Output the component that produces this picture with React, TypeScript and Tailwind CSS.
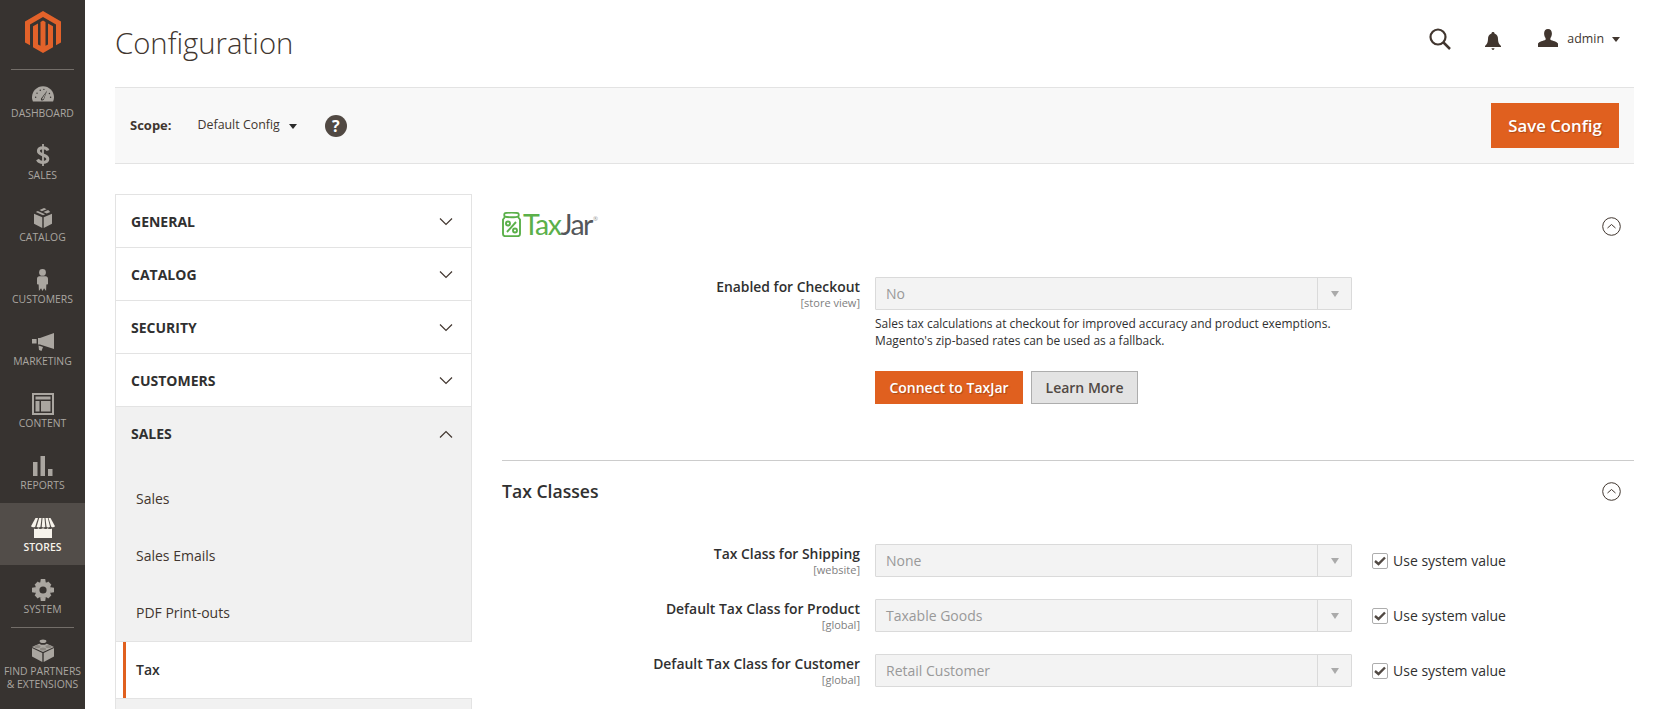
import React from "react";

const ic = "#aaa6a0";

function Magento() {
  return (
    <svg width="36" height="42" viewBox="0 0 36 42" className="block">
      <path fill="#e2622a" d="M18 0L36 10.4V31.4L31 34.2V13.4L18 6 5 13.4V34.2L0 31.4V10.4Z" />
      <path fill="#e2622a" d="M18 42L8 36.2V15.2L13 12.4V33.4L15.5 34.8V11L18 9.6 20.5 11V34.800L23 33.4V12.4L28 15.2V36.2Z" />
    </svg>
  );
}

const icons: Record<string, (c: string) => React.ReactNode> = {
  dashboard: (c) => (
    <svg width="22" height="17" viewBox="0 0 24 18">
      <path fill={c} d="M1 16.5C.2 15 0 13.5 0 12 0 5.4 5.4 0 12 0s12 5.4 12 12c0 1.5-.2 3-1 4.5Z" />
      <path fill="#373330" d="M16.5 4.5 11 12c-1.2 1.2-1.600 2.400-1 3.200.8.8 2.200.4 3-.8Z" />
      <path fill={c} d="M15.600 6.500 11.800 12.400c-.7.9-.9 1.600-.6 2 .4.3 1 0 1.500-.8Z" />
      <g fill="#373330">
        <circle cx="4" cy="12" r=".8" /><circle cx="5.500" cy="7.500" r=".8" /><circle cx="9" cy="4.300" r=".8" /><circle cx="13" cy="3.400" r=".8" /><circle cx="19" cy="8" r=".8" /><circle cx="20.300" cy="12" r=".8" />
      </g>
    </svg>
  ),
  sales: (c) => (
    <svg width="14" height="22" viewBox="0 0 14 22" fill="none" stroke={c} className="-mt-[2px]">
      <path strokeWidth="3" d="M12 6.500C11.200 4.600 9.500 3.800 7 3.800 4.300 3.800 2.400 5 2.400 7.100c0 4.800 9.400 3 9.400 8 0 2.200-2 3.300-4.800 3.300-2.500 0-4.600-1-5.500-2.900" />
      <path strokeWidth="1.800" d="M7 0V22" />
    </svg>
  ),
  catalog: (c) => (
    <svg width="18" height="20" viewBox="0 0 20 22">
      <path fill={c} d="M0 6.300 9.200 10.200V22L0 17.500Z" />
      <path fill={c} d="M20 6.300 10.800 10.200V22L20 17.500Z" />
      <path fill={c} d="M6.200 2.200 11.200 0 14 1.200 8.700 3.500Z" />
      <path fill={c} d="M4.200 3.100 2 4.200 10 7.900 12.300 6.900Z" />
      <path fill={c} d="M10.500 4.400 15.700 2 18.100 4.200 14.200 6Z" />
    </svg>
  ),
  customers: (c) => (
    <svg width="11" height="24" viewBox="0 0 12 24">
      <circle cx="6" cy="3.700" r="3.700" fill={c} />
      <path fill={c} d="M2.500 8h7C10.800 8 12 9.200 12 10.500v6.200l-1.800.2-.3 7L7.700 21 6 24l-1.600-3L2.100 24l-.3-7L0 16.700v-6.200C0 9.200 1.200 8 2.500 8Z" />
    </svg>
  ),
  marketing: (c) => (
    <svg width="22" height="18" viewBox="0 0 22 18">
      <path fill={c} d="M22 0V16L8 11.500 H6V5H8Z" />
      <path fill={c} d="M0 6H4.600V10.500H0Z" />
      <path fill={c} d="M6.500 12.500 11 14 9.500 18 7 17Z" />
    </svg>
  ),
  content: (c) => (
    <svg width="22" height="22" viewBox="0 0 22 22">
      <path fill={c} fillRule="evenodd" d="M0 0H22V22H0ZM2 2V20H20V2Z" />
      <path fill={c} d="M3.500 3.500H18.500V6.500H3.500Z" />
      <path fill={c} d="M3.500 8H7.500V18.500H3.500Z" />
      <path fill={c} d="M9 8H18.500V18.500H9Z" />
    </svg>
  ),
  reports: (c) => (
    <svg width="20" height="20" viewBox="0 0 20 20">
      <path fill={c} d="M0 6H4.500V20H0Z" />
      <path fill={c} d="M7.500 0H12V20H7.500Z" />
      <path fill={c} d="M15 13H19.500V20H15Z" />
    </svg>
  ),
  stores: (c) => (
    <svg width="24" height="20" viewBox="0 0 24 20">
      <path fill={c} d="M3 10.500c1.400.9 3.200.7 4.400-.3 1.400 1.100 3.100 1.100 4.600.1 1.400 1 3.200 1 4.600-.1 1.200 1 3 1.200 4.400.3V20H3Z" />
      <path fill={c} d="M4.500 0H7L4.200 8.700C3 9.600 1 9.600 0 8.300Z" />
      <path fill={c} d="M8.200 0H10.500L9.500 8.800C8.400 9.600 6.700 9.600 5.600 8.800Z" />
      <path fill={c} d="M11.500 0H13.500L14.300 8.800C13.200 9.600 11.800 9.600 10.700 8.800Z" />
      <path fill={c} d="M14.500 0H16.800L19 8.800C17.800 9.600 16.300 9.600 15.500 8.800Z" />
      <path fill={c} d="M17.500 0H19.500L24 8.300C23 9.600 21.300 9.600 20.200 8.700Z" />
    </svg>
  ),
  system: (c) => (
    <svg width="22" height="22" viewBox="0 0 22 22">
      <g fill={c}>
        <path d="M8.800 0h4.400l.5 3.200h-5.400Z" />
        <path d="M8.800 22h4.400l.5-3.200h-5.400Z" />
        <path d="M0 8.800v4.400l3.200.5v-5.400Z" />
        <path d="M22 8.800v4.400l-3.200.5v-5.400Z" />
        <path d="M2.600 5.700 5.700 2.600l2.600 1.900-3.800 3.800Z" />
        <path d="M19.400 5.700 16.300 2.600l-2.600 1.900 3.800 3.800Z" />
        <path d="M2.600 16.300 5.700 19.400l2.600-1.900-3.800-3.800Z" />
        <path d="M19.400 16.300 16.300 19.400l-2.600-1.900 3.800-3.800Z" />
        <circle cx="11" cy="11" r="8.200" />
      </g>
      <circle cx="11" cy="11" r="3.600" fill="#373330" />
    </svg>
  ),
  partners: (c) => (
    <svg width="22" height="23" viewBox="0 0 22 23">
      <path fill={c} d="M0 9 10.300 14V23L0 17.500Z" />
      <path fill={c} d="M22 9 11.700 14V23L22 17.500Z" />
      <path fill={c} d="M11 3 22 8 11 13 0 8Z" />
      <ellipse cx="11" cy="3.800" rx="3.800" ry="2" fill="#373330" />
      <ellipse cx="11" cy="2.200" rx="3.400" ry="1.800" fill={c} />
      <ellipse cx="5.500" cy="7.500" rx="3" ry="1.500" fill="#8b8781" />
      <ellipse cx="16.500" cy="7.500" rx="3" ry="1.500" fill="#8b8781" />
      <ellipse cx="11" cy="10" rx="3" ry="1.500" fill="#8b8781" />
    </svg>
  ),
};

function NavItem({ id, label, active }: { id: string; label: string; active?: boolean }) {
  const c = active ? "#f7f3eb" : ic;
  return (
    <div className={`h-[62px] flex flex-col items-center ${active ? "bg-[#524d49] text-[#f7f3eb]" : "text-[#aaa6a0]"}`}>
      <div className="h-[38px] pt-[12px] flex items-center justify-center shrink-0">{icons[id](c)}</div>
      <span className={`text-[10.4px] leading-[13px] uppercase ${active ? "font-semibold" : ""}`}>{label}</span>
    </div>
  );
}

function Chevron({ up }: { up?: boolean }) {
  return (
    <svg width="14" height="8" viewBox="0 0 14 8" fill="none" stroke="#41362f" strokeWidth="1.200" className="mt-[2px]">
      <path d={up ? "M1 7.500 7 1.500 13 7.500" : "M1 .5 7 6.500 13 .5"} />
    </svg>
  );
}

function TabHead({ label, open }: { label: string; open?: boolean }) {
  return (
    <div className={`h-[53px] flex items-center justify-between pl-[15px] pr-[18px] border-b border-[#e3e3e3] ${open ? "bg-[#f1f1f1]" : "bg-white"}`}>
      <span className="text-[14px] font-bold text-[#303030] uppercase">{label}</span>
      <Chevron up={open} />
    </div>
  );
}

function SubLink({ label }: { label: string }) {
  return <div className="h-[57px] flex items-center pl-[20px] text-[14px] text-[#41362f]">{label}</div>;
}

function Select({ value }: { value: string }) {
  return (
    <div className="w-[477px] h-[33px] shrink-0 flex border border-[#dadada] rounded-[1px] bg-[#f3f3f3]">
      <div className="flex-1 flex items-center pl-[10px] text-[14px] text-[#999999]">{value}</div>
      <div className="w-[34px] border-l border-[#dadada] flex items-center justify-center">
        <span className="w-0 h-0 border-l-[4px] border-r-[4px] border-t-[6px] border-l-transparent border-r-transparent border-t-[#aaaaaa]" />
      </div>
    </div>
  );
}

function FieldLabel({ title, scope }: { title: string; scope: string }) {
  return (
    <div className="w-[358px] shrink-0 text-right">
      <div className="text-[13.900px] leading-[19px] font-semibold text-[#303030]">{title}</div>
      <div className="text-[11px] leading-[13px] text-[#808080]">{scope}</div>
    </div>
  );
}

function SystemRow({ title, scope, value }: { title: string; scope: string; value: string }) {
  return (
    <div className="flex h-[55px]">
      <FieldLabel title={title} scope={scope} />
      <div className="ml-[15px]"><Select value={value} /></div>
      <div className="ml-[20px] h-[33px] flex items-center">
        <span className="w-[16px] h-[16px] border border-[#adadad] rounded-[2px] bg-white flex items-center justify-center">
          <svg width="12" height="10" viewBox="0 0 12 10" fill="none" stroke="#514943" strokeWidth="2.400"><path d="M1 5 4.500 8 11 1.500" /></svg>
        </span>
        <span className="ml-[5px] text-[14px] text-[#303030]">Use system value</span>
      </div>
    </div>
  );
}

function Collapse() {
  return (
    <svg width="19" height="19" viewBox="0 0 19 19" fill="none" stroke="#41362f" strokeWidth="1">
      <circle cx="9.500" cy="9.500" r="8.800" />
      <path d="M5.500 11 9.500 7.500 13.500 11" />
    </svg>
  );
}

export default function App() {
  return (
    <div className="w-[1665px] h-[709px] flex overflow-hidden bg-white font-['Open_Sans',sans-serif]">
      <aside className="w-[85px] shrink-0 bg-[#373330] flex flex-col">
        <div className="h-[70px] shrink-0 mx-[11px] border-b border-[#736e69] flex justify-center pt-[11px]">
          <Magento />
        </div>
        <div className="-mt-[1px]">
          <NavItem id="dashboard" label="Dashboard" />
          <NavItem id="sales" label="Sales" />
          <NavItem id="catalog" label="Catalog" />
          <NavItem id="customers" label="Customers" />
          <NavItem id="marketing" label="Marketing" />
          <NavItem id="content" label="Content" />
          <NavItem id="reports" label="Reports" />
          <NavItem id="stores" label="Stores" active />
          <NavItem id="system" label="System" />
        </div>
        <div className="mx-[11px] border-t border-[#736e69]" />
        <div className="flex flex-col items-center text-[#aaa6a0] pt-[11px]">
          {icons.partners(ic)}
          <span className="text-[10.4px] leading-[13px] mt-[3px] text-center whitespace-nowrap">FIND PARTNERS<br />&amp; EXTENSIONS</span>
        </div>
      </aside>

      <main className="flex-1 pl-[30px] pr-[31px] min-w-0">
        <header className="h-[87px] flex items-start justify-between">
          <h1 className="text-[29.300px] leading-[40px] mt-[23px] font-light text-[#41362f]">Configuration</h1>
          <div className="flex items-center mt-[27px] h-[24px]">
            <svg width="22" height="22" viewBox="0 0 22 22" fill="none" stroke="#41362f" strokeWidth="2.200">
              <circle cx="9" cy="9" r="7.500" />
              <path d="M14.500 14.500 21 21" strokeWidth="2.500" />
            </svg>
            <svg width="16" height="18" viewBox="0 0 16 18" className="ml-[34px] mt-[3px]" fill="#41362f">
              <path d="M8 0c1 0 1.500.6 1.500 1.400C12.300 2.200 13 4.600 13 7c0 3 .8 5 3 7v1H0v-1c2.200-2 3-4 3-7 0-2.400.7-4.800 3.500-5.600C6.500.6 7 0 8 0Z" />
              <path d="M6.500 16.300h3C9.300 17.400 8.700 18 8 18s-1.300-.6-1.500-1.700Z" />
            </svg>
            <svg width="20" height="18" viewBox="0 0 20 18" className="ml-[37px] -mt-[2px]" fill="#41362f">
              <path d="M10 0c2.600 0 3.900 1.900 3.900 4.500 0 1.800-.6 3.500-1.500 4.500v1.700c2.300 1.200 6.600 1.800 7.600 3.900V18H0v-3.400c1-2.100 5.300-2.700 7.600-3.900V9C6.700 8 6.100 6.300 6.100 4.500 6.100 1.900 7.400 0 10 0Z" />
            </svg>
            <span className="ml-[9px] text-[12.400px] text-[#41362f]">admin</span>
            <span className="ml-[8px] w-0 h-0 border-l-[4px] border-r-[4px] border-t-[5px] border-l-transparent border-r-transparent border-t-[#41362f]" />
            <span className="w-[14px]" />
          </div>
        </header>

        <div className="h-[77px] bg-[#f8f8f8] border-t border-b border-[#e3e3e3] flex items-center justify-between pl-[15px] pr-[15px]">
          <div className="flex items-center">
            <span className="text-[13px] font-bold text-[#41362f]">Scope:</span>
            <span className="ml-[26px] text-[12.400px] text-[#41362f]">Default Config</span>
            <span className="ml-[9px] mt-[1px] w-0 h-0 border-l-[4px] border-r-[4px] border-t-[5px] border-l-transparent border-r-transparent border-t-[#2b2b2b]" />
            <span className="ml-[28px] w-[22px] h-[22px] rounded-full bg-[#514943] flex items-center justify-center text-white text-[16px] font-bold leading-none">?</span>
          </div>
          <button className="w-[128px] h-[45px] bg-[#e0601f] text-white text-[16.800px] font-semibold [text-shadow:1px_1px_1px_rgba(0,0,0,0.25)]">Save Config</button>
        </div>

        <div className="flex mt-[30px]">
          <nav className="w-[357px] shrink-0 border-x border-t border-[#e3e3e3] h-[600px]">
            <TabHead label="General" />
            <TabHead label="Catalog" />
            <TabHead label="Security" />
            <TabHead label="Customers" />
            <TabHead label="Sales" open />
            <div className="bg-[#f1f1f1] border-b border-[#e3e3e3] -mt-[1px] pt-[11px]">
              <SubLink label="Sales" />
              <SubLink label="Sales Emails" />
              <SubLink label="PDF Print-outs" />
            </div>
            <div className="h-[56px] ml-[7px] -mr-[2px] pb-[2px] bg-white border-l-[3px] border-[#e0601f] flex items-center pl-[10px] text-[14px] font-semibold text-[#303030]">Tax</div>
            <div className="h-[40px] bg-[#f1f1f1] border-t border-[#e3e3e3]" />
          </nav>

          <section className="flex-1 ml-[30px] min-w-0 -mt-[1px]">
            <div className="h-[84px] flex items-start justify-between pt-[19px] pr-[13px]">
              <div className="flex items-center">
                <svg width="19" height="25" viewBox="0 0 19 25" fill="none" stroke="#5bb04a" strokeWidth="1.900">
                  <path d="M3 1.200C5 .4 14 .4 16 1.200c1 .4 1 3 0 3.400-2 .8-11 .8-13 0-1-.4-1-3 0-3.400Z" />
                  <path d="M3 5 1 7.500V22c0 1.500 1 2.200 2.500 2.200h12c1.500 0 2.500-.7 2.500-2.200V7.500L16 5" />
                  <path d="M14 10 5 20" />
                  <circle cx="6" cy="11.500" r="2" />
                  <circle cx="13" cy="18.500" r="2" />
                </svg>
                <span className="ml-[2px] text-[28.500px] leading-[25px] tracking-[-1.500px] font-['Lato',sans-serif] text-[#5bb04a]">Tax</span>
                <span className="text-[28.500px] leading-[25px] tracking-[-1.500px] font-['Lato',sans-serif] text-[#54575a]">Jar</span>
                <span className="text-[6px] leading-none -mt-[12px] ml-[1px] text-[#999999]">®</span>
              </div>
              <div className="pt-[5px]"><Collapse /></div>
            </div>
            <div className="flex">
              <FieldLabel title="Enabled for Checkout" scope="[store view]" />
              <div className="ml-[15px]">
                <Select value="No" />
                <p className="mt-[5px] text-[11.950px] leading-[17px] text-[#303030]">
                  Sales tax calculations at checkout for improved accuracy and product exemptions.<br />
                  Magento's zip-based rates can be used as a fallback.
                </p>
                <div className="flex mt-[22px]">
                  <button className="w-[148px] h-[33px] bg-[#e0601f] text-white text-[14px] font-semibold [text-shadow:1px_1px_1px_rgba(0,0,0,0.25)]">Connect to TaxJar</button>
                  <button className="ml-[8px] w-[107px] h-[33px] bg-[#e3e3e3] border border-[#adadad] text-[#514943] text-[14px] font-semibold">Learn More</button>
                </div>
              </div>
            </div>
            <div className="mt-[56px] border-t border-[#cccccc] h-[84px] flex items-start justify-between pt-[18px] pr-[13px]">
              <span className="text-[17.600px] leading-[24px] font-semibold text-[#303030]">Tax Classes</span>
              <div className="pt-[3px]"><Collapse /></div>
            </div>
            <SystemRow title="Tax Class for Shipping" scope="[website]" value="None" />
            <SystemRow title="Default Tax Class for Product" scope="[global]" value="Taxable Goods" />
            <SystemRow title="Default Tax Class for Customer" scope="[global]" value="Retail Customer" />
          </section>
        </div>
      </main>
    </div>
  );
}
